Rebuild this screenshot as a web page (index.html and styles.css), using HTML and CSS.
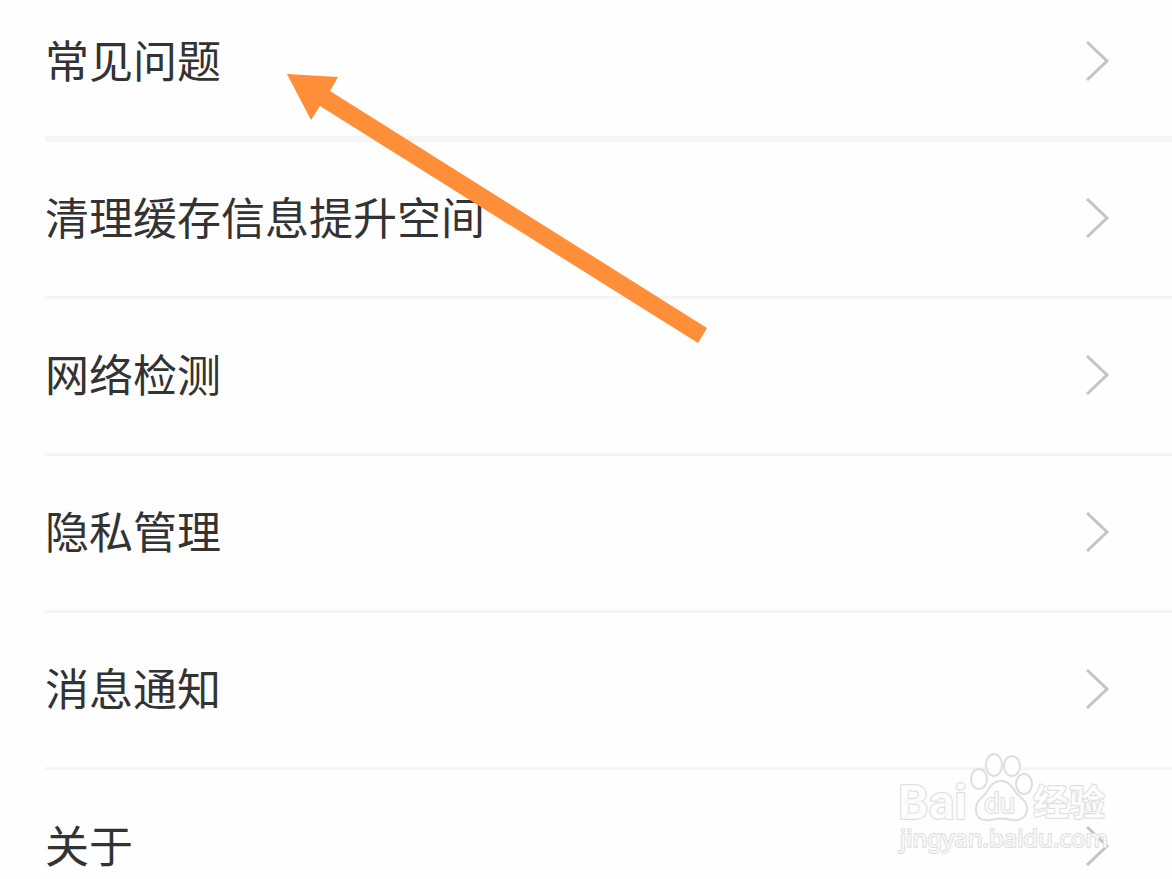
FILE: index.html
```html
<!DOCTYPE html>
<html lang="zh-CN">
<head>
<meta charset="utf-8">
<meta name="viewport" content="width=device-width, initial-scale=1">
<title>设置</title>
<link rel="stylesheet" href="styles.css">
</head>
<body>
<main class="settings">
  <nav class="list">
    <a class="row row-first" href="#faq"><span class="label">常见问题</span><svg class="chevron" viewBox="0 0 24 40" aria-hidden="true"><path d="M1 1 21 20 1 39"/></svg></a>
    <a class="row" href="#cache"><span class="label">清理缓存信息提升空间</span><svg class="chevron" viewBox="0 0 24 40" aria-hidden="true"><path d="M1 1 21 20 1 39"/></svg></a>
    <a class="row" href="#network"><span class="label">网络检测</span><svg class="chevron" viewBox="0 0 24 40" aria-hidden="true"><path d="M1 1 21 20 1 39"/></svg></a>
    <a class="row" href="#privacy"><span class="label">隐私管理</span><svg class="chevron" viewBox="0 0 24 40" aria-hidden="true"><path d="M1 1 21 20 1 39"/></svg></a>
    <a class="row" href="#messages"><span class="label">消息通知</span><svg class="chevron" viewBox="0 0 24 40" aria-hidden="true"><path d="M1 1 21 20 1 39"/></svg></a>
    <a class="row row-last" href="#about"><span class="label">关于</span><svg class="chevron" viewBox="0 0 24 40" aria-hidden="true"><path d="M1 1 21 20 1 39"/></svg></a>
  </nav>
  <svg class="pointer" viewBox="0 0 420 270" aria-hidden="true"><path d="M0 0 51 3 43 17 420 254 411 269 33 32 24 46Z"/></svg>
  <svg class="watermark" viewBox="0 0 220 110" role="img" aria-label="Baidu 经验 jingyan.baidu.com">
    <text class="mark-latin" x="1" y="69">Bai</text>
    <ellipse cx="82" cy="29" rx="8" ry="10"/>
    <ellipse cx="97" cy="15" rx="8" ry="11"/>
    <ellipse cx="115" cy="16" rx="8" ry="10"/>
    <ellipse cx="127" cy="34" rx="8" ry="10"/>
    <path d="M104 31C96 31 93 37 89 43 84 49 78 52 79 61 80 69 86 71 93 70 101 68 107 68 115 70 123 71 129 68 130 60 131 52 124 48 119 43 115 37 112 31 104 31Z"/>
    <text class="mark-du" x="87" y="63">du</text>
    <text class="mark-cjk" x="136" y="66">经验</text>
    <text class="mark-url" x="3" y="97">jingyan.baidu.com</text>
  </svg>
</main>
</body>
</html>
```
FILE: styles.css
```css
* {
  box-sizing: border-box;
}

body {
  margin: 0;
  background: #fefefe;
  color: #333;
  font-family: "Noto Sans CJK SC", sans-serif;
}

.settings {
  position: relative;
  height: 100vh;
  overflow: hidden;
}

.list {
  padding-left: 45px;
}

.row {
  display: flex;
  align-items: center;
  justify-content: space-between;
  padding: 44px 62px 46px 0;
  border-bottom: 3px solid #f5f5f5;
  color: inherit;
  font-size: 44px;
  line-height: 60px;
  text-decoration: none;
}

.row-first {
  padding-top: 29px;
  padding-bottom: 43px;
  border-bottom-width: 6px;
}

.row-last {
  border-bottom: 0;
}

.label {
  padding-bottom: 4px;
}

.chevron {
  width: 24px;
  height: 40px;
  fill: none;
  stroke: #c4c4c4;
  stroke-width: 3;
}

.pointer {
  position: absolute;
  top: 74px;
  left: 287px;
  width: 420px;
  height: 270px;
  fill: #ff8e38;
}

.watermark {
  position: absolute;
  right: 55px;
  bottom: 19px;
  width: 220px;
  height: 110px;
  fill: rgb(255 255 255 / 80%);
  stroke: #dedede;
  stroke-width: 2;
  stroke-linejoin: round;
}

.watermark text {
  paint-order: stroke;
}

.mark-latin {
  font: bold 48px Roboto, sans-serif;
}

.mark-du {
  font: 28px Roboto, sans-serif;
}

.mark-cjk {
  font: bold 36px "Noto Sans CJK SC", sans-serif;
}

.mark-url {
  font: 24px "Noto Sans", sans-serif;
}
```
